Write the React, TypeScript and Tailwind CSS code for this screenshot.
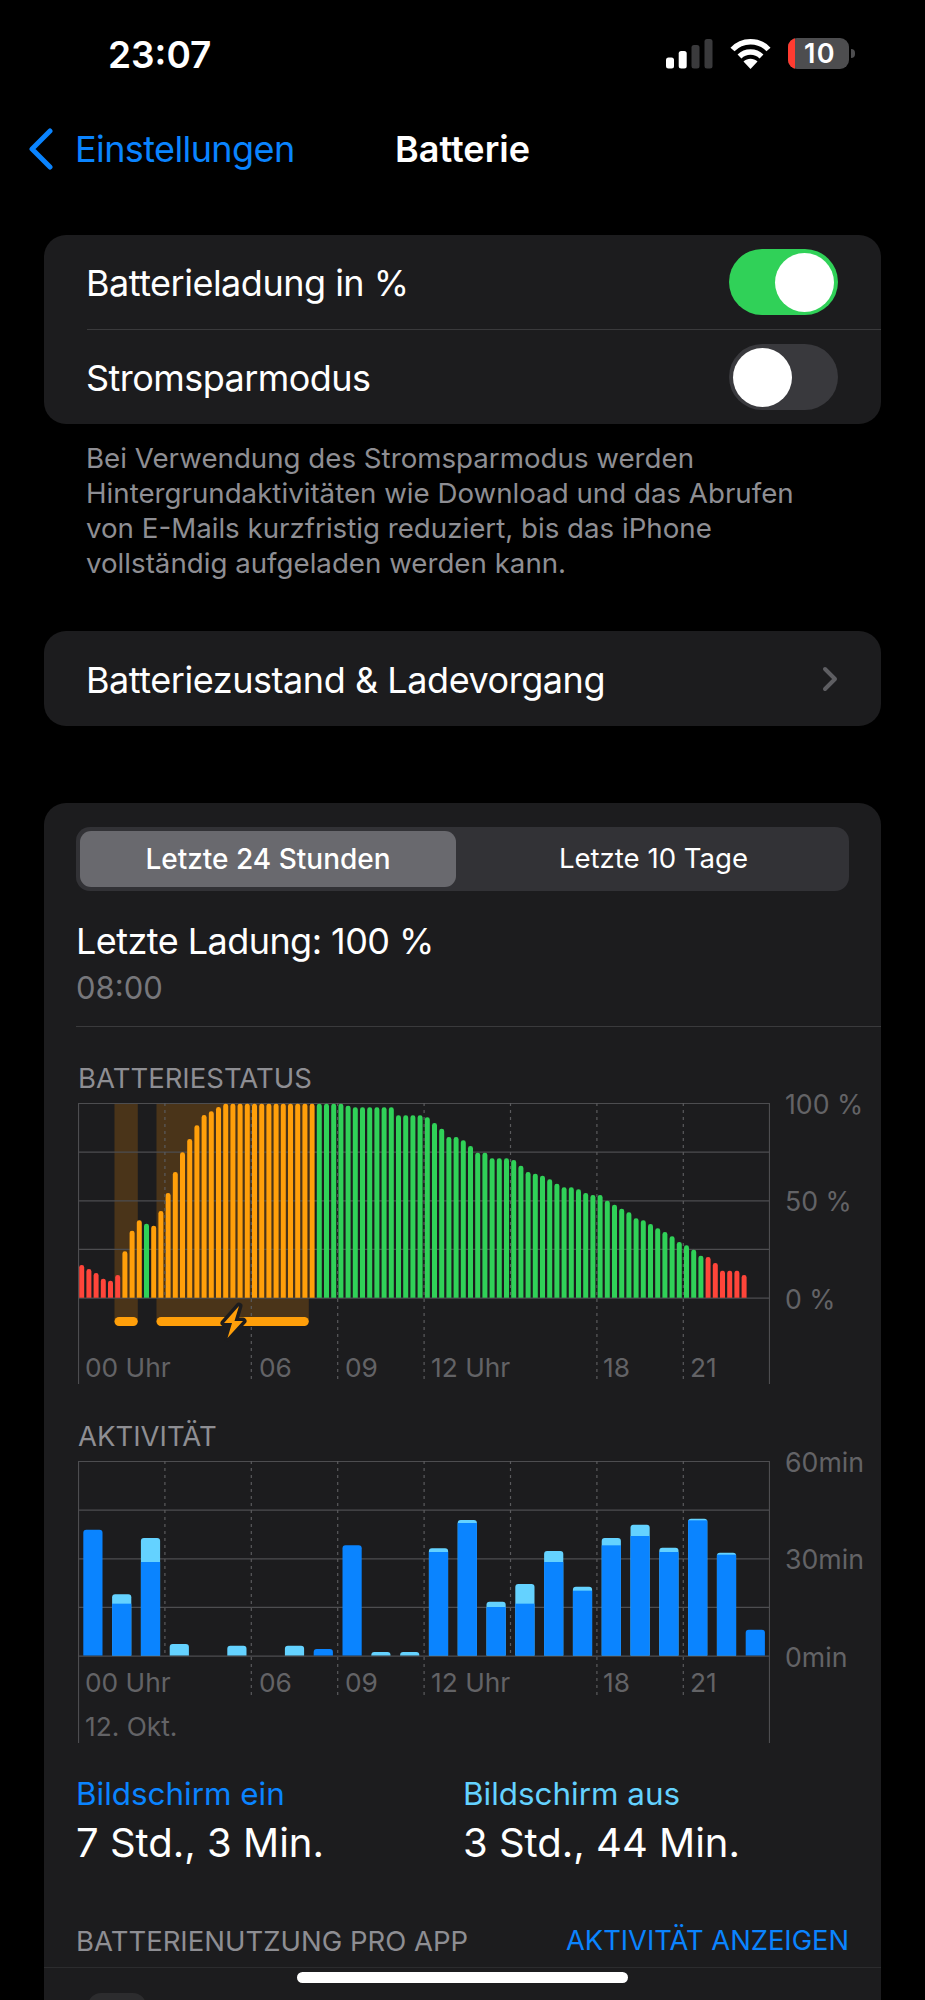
import React from "react";

const font = { fontFamily: "Inter, 'Liberation Sans', sans-serif" };

const batTops = [616,628,640,657,663,646,575,513,482,492,498,454,400,337,278,238,197,166,155,142,132,132,132,132,132,132,132,132,132,132,132,132,132,132,132,132,132,138,143,143,143,143,143,143,167,167,167,167,173,190,207,232,232,242,259,279,279,296,296,296,301,318,337,342,348,359,372,383,383,389,400,406,406,423,435,447,458,476,482,493,506,517,530,547,557,570,588,592,610,633,633,633,646];

function batColor(i: number) {
  if (i <= 5 || i >= 87) return "#ff453a";
  if (i === 9 || i >= 33) return "#30d158";
  return "#ff9f0a";
}

const activity: [number | null, number | null][] = [
  [null,390],[584,612],[415,487],[733,null],[null,null],[738,null],[null,null],[738,null],[null,748],[null,437],[757,null],[757,null],
  [446,457],[361,370],[606,622],[553,612],[454,487],[561,573],[415,437],[375,409],[444,457],[357,362],[459,465],[null,690],
];

const gridX = [86.4, 172.8, 259.2, 345.6, 432, 518.4, 604.8];

function barPath(x: number, top: number, bottom: number, w: number, r: number) {
  const rr = Math.min(r, bottom - top);
  return `M${x} ${bottom}V${top + rr}Q${x} ${top} ${x + rr} ${top}H${x + w - rr}Q${x + w} ${top} ${x + w} ${top + rr}V${bottom}Z`;
}

function Grid({ height, plot }: { height: number; plot: number }) {
  const g = "#4d4d50";
  return (
    <>
      {[0, 0.25, 0.5, 0.75, 1].map((f) => (
        <line key={f} x1={0} x2={691.5} y1={0.5 + f * plot} y2={0.5 + f * plot} stroke={g} strokeWidth={1.2} />
      ))}
      <line x1={0.5} x2={0.5} y1={0} y2={height} stroke={g} strokeWidth={1.2} />
      <line x1={691.5} x2={691.5} y1={0} y2={height} stroke={g} strokeWidth={1.2} />
    </>
  );
}

function Dashes({ plot, dashEnd }: { plot: number; dashEnd: number }) {
  return (
    <>
      {gridX.map((x, i) => (
        <line
          key={x}
          x1={x + 0.5}
          x2={x + 0.5}
          y1={0}
          y2={i === 0 || i === 4 ? plot : dashEnd}
          stroke="#5a5a5d"
          strokeWidth={1.2}
          strokeDasharray="3 4"
        />
      ))}
    </>
  );
}

function BatteryChart() {
  return (
    <svg width={692} height={282} className="block">
      <rect x={36.5} y={0} width={23.3} height={219} fill="#4a3419" />
      <rect x={78.5} y={0} width={152.3} height={219} fill="#4a3419" />
      <Grid height={281} plot={194.6} />
      {batTops.map((t, i) => {
        const top = (t - 130) / 3;
        return <path key={i} d={barPath(1.2 + 7.2 * i, top, 194.8, 5, 2.4)} fill={batColor(i)} />;
      })}
      <Dashes plot={194.6} dashEnd={277} />
      <rect x={36.5} y={214} width={23.3} height={9} rx={4.5} fill="#ff9f0a" />
      <rect x={78.5} y={214} width={152.3} height={9} rx={4.5} fill="#ff9f0a" />
      <path
        d="M161 203L146 220H154L149.5 235L165 218H156.5L161 203Z"
        fill="#ff9f0a"
        stroke="#1c1c1e"
        strokeWidth={7}
        strokeLinejoin="round"
        paintOrder="stroke"
      />
    </svg>
  );
}

function ActivityChart() {
  const toY = (v: number) => (v - 184) / 3;
  return (
    <svg width={692} height={282} className="block">
      <Grid height={282} plot={194.6} />
      <Dashes plot={194.6} dashEnd={234} />
      {activity.map(([l, d], i) => {
        const x = 5.3 + 28.8 * i;
        const bottom = 194.6;
        return (
          <g key={i}>
            {l !== null && <path d={barPath(x, toY(l), bottom, 19.2, 3)} fill="#64d2ff" />}
            {d !== null && (
              l !== null
                ? <rect x={x} y={toY(d)} width={19.2} height={bottom - toY(d)} fill="#0a84ff" />
                : <path d={barPath(x, toY(d), bottom, 19.2, 3)} fill="#0a84ff" />
            )}
          </g>
        );
      })}
    </svg>
  );
}

function AxisLabels({ rows }: { rows: string[] }) {
  return (
    <div className="absolute left-[707px] top-0">
      {rows.map((r, i) => (
        <span key={r} className="absolute left-0 whitespace-nowrap text-[26.7px] leading-[30px] text-[#636366]" style={{ top: -14 + i * 97.3 }}>
          {r}
        </span>
      ))}
    </div>
  );
}

function HourLabels({ top }: { top: number }) {
  const items: [string, number][] = [["00 Uhr", 7], ["06", 181], ["09", 267], ["12 Uhr", 353], ["18", 525], ["21", 612]];
  return (
    <>
      {items.map(([t, x]) => (
        <span key={t} className="absolute whitespace-nowrap text-[26.3px] leading-[30px] text-[#636366]" style={{ left: x, top }}>
          {t}
        </span>
      ))}
    </>
  );
}

function Toggle({ on }: { on: boolean }) {
  return (
    <div className={`flex h-[66px] w-[109px] items-center rounded-full px-[4px] ${on ? "justify-end bg-[#30d158]" : "justify-start bg-[#39393d]"}`}>
      <div className="h-[59px] w-[59px] rounded-full bg-white" />
    </div>
  );
}

export default function App() {
  return (
    <div className="h-[2000px] w-[925px] overflow-hidden bg-black text-white" style={font}>
      {/* status bar */}
      <div className="flex h-[112px] items-start justify-between pl-[108px] pr-[70px]">
        <span className="mt-[32px] text-[37px] font-semibold leading-[46px]">23:07</span>
        <div className="mt-[38px] flex items-start gap-[17px]">
          <svg width={47} height={31} viewBox="0 0 47 31">
            <rect x="0" y="19.5" width="8" height="11" rx="2.5" fill="#fff" />
            <rect x="12.7" y="13" width="8" height="17.5" rx="2.5" fill="#fff" />
            <rect x="25.5" y="7" width="8" height="23.5" rx="2.5" fill="#3a3a3c" />
            <rect x="38.5" y="1" width="8" height="29.5" rx="2.5" fill="#3a3a3c" />
          </svg>
          <svg width={41} height={31} viewBox="0 0 41 31" fill="none" stroke="#fff">
            <path d="M2.5 11.5C12 1 29 1 38.5 11.5" strokeWidth={5.5} />
            <path d="M9.5 18.5C15.5 12.5 25.5 12.5 31.5 18.5" strokeWidth={5.5} />
            <path d="M20.5 31L13.5 23.5C17.5 19.8 23.5 19.8 27.5 23.5Z" fill="#fff" stroke="none" />
          </svg>
          <div className="flex items-center">
            <div className="relative flex h-[31px] w-[61px] items-center justify-center overflow-hidden rounded-[9px] bg-[#4d4d4f]">
              <div className="absolute bottom-0 left-0 top-0 w-[7px] bg-[#ff3b30]" />
              <span className="pl-[3px] text-[27px] font-semibold leading-none tracking-[1.5px]">10</span>
            </div>
            <div className="ml-[2px] h-[9px] w-[4px] rounded-r-full bg-[#4d4d4f]" />
          </div>
        </div>
      </div>

      {/* nav */}
      <div className="relative flex h-[74px] items-center pl-[28px]">
        <svg width={26} height={42} viewBox="0 0 26 42" fill="none" stroke="#0a84ff" strokeWidth={5} strokeLinecap="round" strokeLinejoin="round">
          <path d="M22 3L4 21L22 39" />
        </svg>
        <span className="ml-[21px] text-[36px] leading-[42px] tracking-[-0.6px] text-[#0a84ff]">Einstellungen</span>
        <span className="absolute inset-x-0 text-center text-[36px] font-semibold leading-[42px]">Batterie</span>
      </div>

      {/* toggles */}
      <div className="mx-[44px] mt-[49px] rounded-[22px] bg-[#1c1c1e]">
        <div className="flex h-[94px] items-center justify-between pl-[42px] pr-[43px]">
          <span className="pt-[2px] text-[36px] leading-[42px] tracking-[-0.5px]">Batterieladung in %</span>
          <Toggle on />
        </div>
        <div className="ml-[43px] h-px bg-[#3a3a3c]" />
        <div className="flex h-[94px] items-center justify-between pl-[42px] pr-[43px]">
          <span className="pt-[2px] text-[36px] leading-[42px] tracking-[-0.55px]">Stromsparmodus</span>
          <Toggle on={false} />
        </div>
      </div>

      <p className="ml-[86px] mt-[17px] text-[27.7px] leading-[35px] text-[#8e8e93]">
        Bei Verwendung des Stromsparmodus werden<br />
        Hintergrundaktivitäten wie Download und das Abrufen<br />
        von E-Mails kurzfristig reduziert, bis das iPhone<br />
        vollständig aufgeladen werden kann.
      </p>

      <div className="mx-[44px] mt-[50px] flex h-[95px] items-center justify-between rounded-[22px] bg-[#1c1c1e] pl-[42px] pr-[43px]">
        <span className="pt-[2px] text-[36px] leading-[42px] tracking-[-0.45px]">Batteriezustand &amp; Ladevorgang</span>
        <svg width={16} height={26} viewBox="0 0 16 26" fill="none" stroke="#5e5e62" strokeWidth={4} strokeLinecap="round" strokeLinejoin="round">
          <path d="M3 3L13 13L3 23" />
        </svg>
      </div>

      {/* usage card */}
      <div className="mx-[44px] mt-[77px] h-[1200px] rounded-t-[22px] bg-[#1c1c1e] pt-[24px]">
        <div className="ml-[32px] flex h-[64px] w-[773px] rounded-[14px] bg-[#323236] p-[4px]">
          <div className="flex w-[376px] items-center justify-center rounded-[11px] bg-[#69696e] text-[28px] font-medium">Letzte 24 Stunden</div>
          <div className="flex flex-1 items-center justify-center pl-[6px] text-[27.6px]">Letzte 10 Tage</div>
        </div>
        <div className="ml-[32px] mt-[29px] text-[36px] leading-[42px] tracking-[-0.55px]">Letzte Ladung: 100 %</div>
        <div className="ml-[32px] mt-[8px] text-[31px] leading-[36px] text-[#77777b]">08:00</div>
        <div className="ml-[32px] mt-[20px] h-px bg-[#3a3a3c]" />

        <div className="ml-[34px] mt-[35px] text-[27.5px] leading-[32px] text-[#8e8e93]">BATTERIESTATUS</div>
        <div className="relative ml-[34px] mt-[9px] h-[282px] w-[800px]">
          <BatteryChart />
          <AxisLabels rows={["100 %", "50 %", "0 %"]} />
          <HourLabels top={250} />
        </div>

        <div className="ml-[34px] mt-[35px] text-[27.5px] leading-[32px] text-[#8e8e93]">AKTIVITÄT</div>
        <div className="relative ml-[34px] mt-[9px] h-[282px] w-[800px]">
          <ActivityChart />
          <AxisLabels rows={["60min", "30min", "0min"]} />
          <HourLabels top={207} />
          <span className="absolute left-[7px] top-[251px] text-[26.3px] leading-[30px] text-[#636366]">12. Okt.</span>
        </div>

        <div className="ml-[32px] mt-[33px] flex">
          <div className="w-[387px]">
            <div className="text-[31.4px] leading-[36px] text-[#0a84ff]">Bildschirm ein</div>
            <div className="mt-[7px] text-[40px] leading-[48px]">7 Std., 3 Min.</div>
          </div>
          <div>
            <div className="text-[31.4px] leading-[36px] text-[#64d2ff]">Bildschirm aus</div>
            <div className="mt-[7px] text-[40px] leading-[48px]">3 Std., 44 Min.</div>
          </div>
        </div>

        <div className="ml-[32px] mr-[32px] mt-[58px] flex justify-between leading-[32px]">
          <span className="text-[27.5px] text-[#8e8e93]">BATTERIENUTZUNG PRO APP</span>
          <span className="text-[27.3px] text-[#0a84ff]">AKTIVITÄT ANZEIGEN</span>
        </div>
        <div className="mt-[10px] h-px bg-[#2c2c2e]" />
        <div className="ml-[44px] mt-[25px] h-[58px] w-[58px] rounded-[13px] bg-[#2c2c2e]" />
      </div>

      <div className="fixed left-[297px] top-[1972px] h-[11px] w-[331px] rounded-full bg-white" />
    </div>
  );
}
